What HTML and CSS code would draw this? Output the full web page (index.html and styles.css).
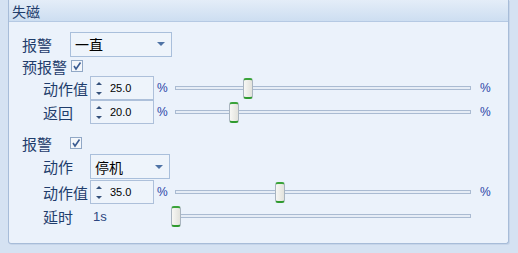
FILE: index.html
```html
<!DOCTYPE html>
<html lang="zh">
<head>
    <meta charset="UTF-8">
    <title>失磁</title>
    <link rel="stylesheet" href="styles.css">
</head>
<body>
    <div class="panel">
        <div class="panel-title">失磁</div>
        <div class="panel-body">
            <div class="row r-top">
                <span class="label">报警</span>
                <div class="combo wide"><span>一直</span><i class="arrow"></i></div>
            </div>
            <div class="row r-check">
                <span class="label auto">预报警</span>
                <span class="check"><svg width="10" height="10" viewBox="0 0 10 10"><polyline points="2,5 4,8 8.5,1.5" fill="none" stroke="#3b5c92" stroke-width="1.6"/></svg></span>
            </div>
            <div class="row sub">
                <span class="label">动作值</span>
                <div class="spin"><span class="spin-btn"><i class="up"></i><i class="down"></i></span><span>25.0</span></div>
                <span class="unit">%</span>
                <div class="slider"><div class="track"></div><div class="thumb" style="left: 72px"></div></div>
                <span class="unit end">%</span>
            </div>
            <div class="row sub">
                <span class="label">返回</span>
                <div class="spin"><span class="spin-btn"><i class="up"></i><i class="down"></i></span><span>20.0</span></div>
                <span class="unit">%</span>
                <div class="slider"><div class="track"></div><div class="thumb" style="left: 58px"></div></div>
                <span class="unit end">%</span>
            </div>
            <div class="row r-check second">
                <span class="label">报警</span>
                <span class="check"><svg width="10" height="10" viewBox="0 0 10 10"><polyline points="2,5 4,8 8.5,1.5" fill="none" stroke="#3b5c92" stroke-width="1.6"/></svg></span>
            </div>
            <div class="row sub r-combo">
                <span class="label">动作</span>
                <div class="combo"><span>停机</span><i class="arrow"></i></div>
            </div>
            <div class="row sub">
                <span class="label">动作值</span>
                <div class="spin"><span class="spin-btn"><i class="up"></i><i class="down"></i></span><span>35.0</span></div>
                <span class="unit">%</span>
                <div class="slider"><div class="track"></div><div class="thumb" style="left: 104px"></div></div>
                <span class="unit end">%</span>
            </div>
            <div class="row sub">
                <span class="label">延时</span>
                <span class="plain">1s</span>
                <div class="slider"><div class="track"></div><div class="thumb" style="left: 0px"></div></div>
            </div>
        </div>
    </div>
</body>
</html>
```
FILE: styles.css
```css
* {
    margin: 0;
    padding: 0;
    box-sizing: border-box;
}
body {
    background: #d5e2f2;
    font-family: "Liberation Sans", "Noto Sans CJK SC", sans-serif;
    color: #1e3a66;
    width: 518px;
    height: 253px;
    overflow: hidden;
}
.panel {
    margin: 0 8px;
    width: 501px;
    height: 244px;
    background: #ebf2fb;
    border: 1px solid #a7bcd8;
    border-top: none;
    border-radius: 0 0 3px 3px;
    box-shadow: 1px 1px 0 #c6d5e9;
}
.panel-title {
    height: 22px;
    padding-left: 3px;
    font-family: "Noto Sans CJK SC", sans-serif;
    font-size: 14px;
    line-height: 22px;
    color: #1f3d6c;
    background: linear-gradient(#e4edf8, #cddef1);
    border-bottom: 1px solid #b5c9e3;
}
.panel-body {
    padding: 10px 0 0 13px;
}
.row {
    display: flex;
    align-items: center;
    height: 24px;
}
.r-check {
    height: 20px;
}
.second {
    margin-top: 9px;
}
.r-combo {
    height: 27px;
}
.sub {
    padding-left: 21px;
}
.label {
    width: 48px;
    font-family: "Noto Sans CJK SC", sans-serif;
    font-size: 15px;
    color: #1f3d6c;
}
.sub .label {
    width: 47px;
}
.label.auto {
    width: 49px;
}
.combo {
    display: flex;
    align-items: center;
    justify-content: space-between;
    width: 80px;
    height: 25px;
    padding: 0 6px 0 4px;
    border: 1px solid #a9bfdb;
    background: #eef4fb;
    font-family: "Noto Sans CJK SC", sans-serif;
    font-size: 14px;
    color: #000;
}
.combo.wide {
    width: 102px;
}
.arrow {
    width: 0;
    height: 0;
    border-left: 4px solid transparent;
    border-right: 4px solid transparent;
    border-top: 4px solid #4f73a5;
}
.check {
    display: flex;
    align-items: center;
    justify-content: center;
    width: 12px;
    height: 12px;
    border: 1px solid #91a8c6;
    background: #f4f7fb;
}
.spin {
    display: flex;
    align-items: center;
    width: 64px;
    height: 24px;
    border: 1px solid #adc0da;
    background: #eef4fb;
    font-size: 11px;
    color: #000;
}
.spin-btn {
    display: flex;
    flex-direction: column;
    justify-content: center;
    gap: 7px;
    width: 19px;
    padding-left: 5px;
}
.spin-btn i {
    width: 0;
    height: 0;
    border-left: 3px solid transparent;
    border-right: 3px solid transparent;
}
.spin-btn .up {
    border-bottom: 3px solid #34507a;
}
.spin-btn .down {
    border-top: 3px solid #34507a;
}
.unit {
    width: 17px;
    padding-left: 3px;
    font-size: 12px;
    color: #2a44a6;
}
.unit.end {
    padding-left: 9px;
}
.plain {
    width: 81px;
    padding-left: 3px;
    font-size: 13px;
    color: #2c4680;
}
.slider {
    position: relative;
    width: 300px;
    height: 24px;
}
.track {
    position: absolute;
    left: 4px;
    right: 0;
    top: 10px;
    height: 4px;
    border: 1px solid #aabbd2;
    background: #e6edf6;
}
.thumb {
    position: absolute;
    top: 2px;
    width: 10px;
    height: 21px;
    border: 1px solid #a9b4bf;
    border-top: 2px solid #3aa33a;
    border-bottom: 2px solid #2f9a2f;
    border-radius: 3px;
    background: linear-gradient(90deg, #f7f7f4, #e2e2dc);
}
```
